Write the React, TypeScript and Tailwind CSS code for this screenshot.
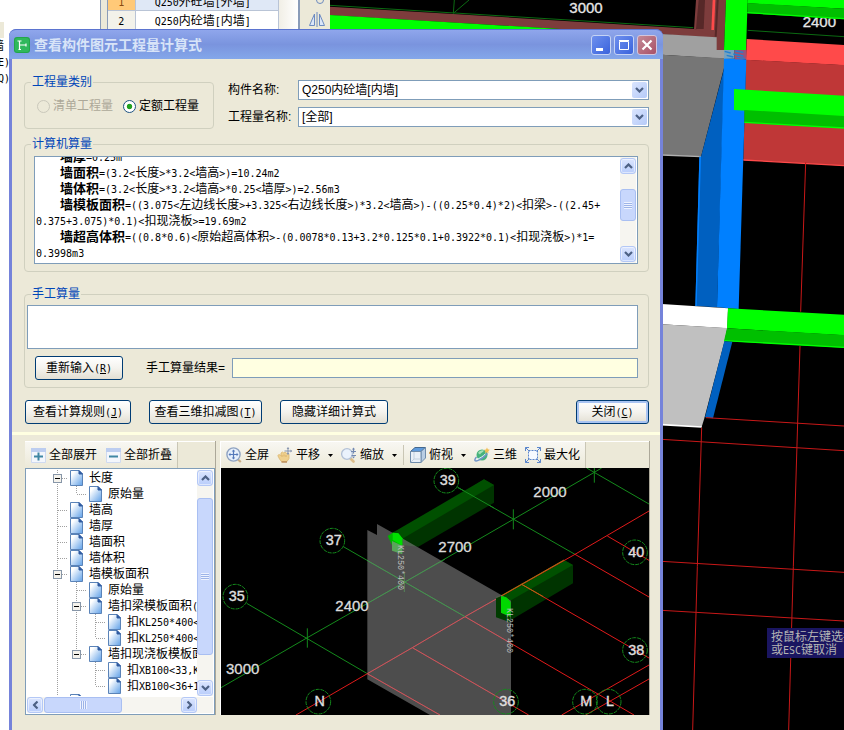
import { useState, type ReactNode } from 'react';

type Guide = 'line' | 'tee' | 'end' | 'minus' | 'minusEnd' | 'blank';

interface TreeRow {
    guides: Guide[];
    label: string;
}

const TREE_ROWS: TreeRow[] = [
    { guides: ['minus'], label: '长度' },
    { guides: ['line', 'end'], label: '原始量' },
    { guides: ['tee'], label: '墙高' },
    { guides: ['tee'], label: '墙厚' },
    { guides: ['tee'], label: '墙面积' },
    { guides: ['tee'], label: '墙体积' },
    { guides: ['minus'], label: '墙模板面积' },
    { guides: ['line', 'tee'], label: '原始量' },
    { guides: ['line', 'minus'], label: '墙扣梁模板面积(' },
    { guides: ['line', 'line', 'tee'], label: '扣KL250*400<' },
    { guides: ['line', 'line', 'end'], label: '扣KL250*400<' },
    { guides: ['line', 'minusEnd'], label: '墙扣现浇板模板面' },
    { guides: ['line', 'blank', 'tee'], label: '扣XB100<33,K' },
    { guides: ['line', 'blank', 'end'], label: '扣XB100<36+1' },
    { guides: ['tee'], label: '' },
];

const FORMULAS = [
    { name: '墙厚', lines: ['=0.25m'] },
    { name: '墙面积', lines: ['=(3.2<长度>*3.2<墙高>)=10.24m2'] },
    { name: '墙体积', lines: ['=(3.2<长度>*3.2<墙高>*0.25<墙厚>)=2.56m3'] },
    {
        name: '墙模板面积',
        lines: [
            '=((3.075<左边线长度>+3.325<右边线长度>)*3.2<墙高>)-((0.25*0.4)*2)<扣梁>-((2.45+',
            '0.375+3.075)*0.1)<扣现浇板>=19.69m2',
        ],
    },
    {
        name: '墙超高体积',
        lines: [
            '=((0.8*0.6)<原始超高体积>-(0.0078*0.13+3.2*0.125*0.1+0.3922*0.1)<扣现浇板>)*1=',
            '0.3998m3',
        ],
    },
];

// Half-width characters take exactly half of a Chinese character
function Txt({ children }: { children: string }) {
    return (
        <>
            {children.split(/([\x20-\x7e]+)/).map((part, i) =>
                i % 2 ? (
                    <span
                        key={i}
                        className="font-['DejaVu_Sans_Mono',monospace] text-[10px] leading-none font-normal"
                    >
                        {part}
                    </span>
                ) : (
                    part
                )
            )}
        </>
    );
}

function Chevron({ className = '' }: { className?: string }) {
    return (
        <svg viewBox="0 0 9 6" className={`h-[6px] w-[9px] ${className}`} fill="none">
            <path d="M1 1l3.500 3.500L8 1" stroke="#4d6185" strokeWidth="2.200" />
        </svg>
    );
}

function ScrollButton({ turn, label }: { turn: string; label: string }) {
    return (
        <button
            type="button"
            aria-label={label}
            className="flex size-4 shrink-0 items-center justify-center rounded-[3px] border border-[#b4c8f6] bg-linear-to-b from-[#dbe5fe] to-[#b9cdfb] shadow-[inset_0_0_0_1px_#ffffff80]"
        >
            <Chevron className={turn} />
        </button>
    );
}

function Fieldset({ title, className, children }: { title: string; className: string; children: ReactNode }) {
    return (
        <fieldset className={`min-w-0 rounded-[4px] border border-[#d0d0bf] ${className}`}>
            <legend className="ml-[6px] px-px leading-4 text-[#0046b8]">{title}</legend>
            {children}
        </fieldset>
    );
}

function XpButton({ text, hotkey, className }: { text: string; hotkey?: string; className: string }) {
    return (
        <button
            type="button"
            className={`h-6 shrink-0 rounded-[3px] border border-[#003c74] bg-linear-to-b from-white via-[#f4f3ee] to-[#e3dfd3] leading-4 whitespace-nowrap ${className}`}
        >
            {text}
            {hotkey && (
                <span className="font-['DejaVu_Sans_Mono',monospace] text-[10px] leading-none">
                    (<u>{hotkey}</u>)
                </span>
            )}
        </button>
    );
}

function SelectRow({ id, label, value }: { id: string; label: string; value: string }) {
    return (
        <div className="flex h-5 items-center">
            <label htmlFor={id} className="w-[70px] shrink-0 whitespace-nowrap">
                {label}
            </label>
            <div className="relative flex-1">
                <select
                    id={id}
                    className="block h-5 w-full appearance-none border border-[#7f9db9] bg-white pl-[3px] leading-4 outline-none"
                >
                    <option>{value}</option>
                </select>
                <span className="pointer-events-none absolute top-[2px] right-[2px] flex h-4 w-[15px] items-center justify-center rounded-[2px] bg-linear-to-br from-[#dae5fe] to-[#b5caf8]">
                    <Chevron />
                </span>
            </div>
        </div>
    );
}

function GuideCell({ type }: { type: Guide }) {
    const top = type !== 'blank';
    const bottom = type === 'line' || type === 'tee' || type === 'minus';
    const across = type !== 'blank' && type !== 'line';
    const box = type === 'minus' || type === 'minusEnd';
    return (
        <svg viewBox="0 0 19 16" className="h-4 w-[19px] shrink-0" shapeRendering="crispEdges" fill="none">
            <g stroke="#a0a0a0" strokeDasharray="1 1">
                {top && <path d="M9.500 0V8" />}
                {bottom && <path d="M9.500 8V16" />}
                {across && <path d="M10 8.500H19" />}
            </g>
            {box && (
                <>
                    <rect x="5.500" y="4.500" width="8" height="8" fill="#f4f2ec" stroke="#8796a8" />
                    <path d="M7 8.500h5" stroke="#000" />
                </>
            )}
        </svg>
    );
}

function PageIcon() {
    return (
        <svg viewBox="0 0 13 16" className="mr-[6px] ml-[3px] h-4 w-[13px] shrink-0">
            <defs>
                <linearGradient id="page" x1="0" y1="0" x2="1" y2="1">
                    <stop offset="0.200" stopColor="#fff" />
                    <stop offset="1" stopColor="#5fa0e8" />
                </linearGradient>
            </defs>
            <path d="M.5.500H9L12.500 4v11.500H.5z" fill="url(#page)" stroke="#5a83b8" />
            <path d="M9 .5V4h3.500z" fill="#2f5aa0" stroke="#2f5aa0" />
        </svg>
    );
}

function ToolButton({ icon, text, menu }: { icon: ReactNode; text: string; menu?: boolean }) {
    return (
        <button type="button" className="flex shrink-0 items-center gap-[3px] whitespace-nowrap">
            {icon}
            <span>{text}</span>
            {menu && (
                <svg viewBox="0 0 5 3" className="ml-[5px] h-[3px] w-[5px]">
                    <path d="M0 0h5L2.500 3z" />
                </svg>
            )}
        </button>
    );
}

const FullIcon = (
    <svg viewBox="0 0 16 16" className="size-4" fill="none">
        <path d="M12 12.500l2.800 2.500" stroke="#c9ad84" strokeWidth="2.200" />
        <circle cx="7.500" cy="7.500" r="6.600" fill="#e6effb" stroke="#8fa3c2" strokeWidth="1.400" />
        <path d="M7.500 3v9M3 7.500h9" stroke="#5579ba" strokeWidth="1.200" />
        <path d="M5.800 4.400L7.500 2.500l1.700 1.900zM5.800 10.600l1.700 1.900 1.700-1.900zM4.400 5.800L2.500 7.500l1.900 1.700zM10.600 5.800l1.900 1.700-1.900 1.700z" fill="#5579ba" />
    </svg>
);

const PanIcon = (
    <svg viewBox="0 0 16 16" className="size-4" fill="none">
        <path d="M.8 8.500L2 7.500l2 1V6l1.500-1 1 .8L8 5.200l1.300 1 1.500-.2 1.200 1.500v4L10 14.500H4.500L2.500 12z" fill="#efd08e" stroke="#dcb66e" strokeWidth=".8" />
        <path d="M5 8v2M7 7.500v2M9 8v2" stroke="#d3a75c" strokeWidth=".7" />
        <path d="M4.500 15h5.500" stroke="#b98a55" strokeWidth="1.400" />
        <path d="M11 .5v7M7.500 4h7" stroke="#8694ae" />
        <path d="M9.600 2L11 .3 12.400 2zM9.600 6L11 7.700 12.400 6zM13.500 2.600L15.200 4l-1.700 1.400z" fill="#8694ae" />
    </svg>
);

const ZoomIcon = (
    <svg viewBox="0 0 16 16" className="size-4" fill="none">
        <path d="M9.500 11.500l3 3" stroke="#dcbd8a" strokeWidth="2.600" strokeLinecap="round" />
        <circle cx="6" cy="7" r="5.400" fill="#eaf2fc" stroke="#b3c1d6" strokeWidth="1.300" />
        <path d="M12.500 1.500v5M10 4.500h5M10.500 8.500h4.500" stroke="#7289b2" strokeWidth="1.200" />
        <path d="M11 2.500L12.500.500l1.500 2zM11 9.500l1.500 2 1.500-2z" fill="#7289b2" />
    </svg>
);

const CubeIcon = (
    <svg viewBox="0 0 16 16" className="size-4" strokeLinejoin="round" stroke="#6f8cab">
        <path d="M.5 4.500L5 .5h10.500L11 4.500z" fill="#5f9bdc" stroke="#44688f" />
        <path d="M11 4.500l4.500-4V11L11 15.500z" fill="#b9cee4" />
        <path d="M.5 4.500H11v11H.5z" fill="#e9f0f7" />
        <path d="M4 5v7M1 15l3-3h6.500" fill="none" stroke="#c2d0de" />
    </svg>
);

const OrbitIcon = (
    <svg viewBox="0 0 16 16" className="size-4" fill="none">
        <circle cx="8" cy="8" r="5.500" fill="#46b27c" />
        <path d="M4 6c1.500-2.500 4-3.200 6-2.500-1 2-3 1.800-4 4z" fill="#a6e2b6" />
        <path d="M2.500 10C1 11.500.5 13 1.200 13.700c1.200 1.200 7-1.700 12.300-7.200" stroke="#6f93c8" strokeWidth="1.400" />
        <path d="M2.500 12.300c3-.6 6.500-3 9-5.500" stroke="#e6f4ff" />
        <path d="M13 .5l.8 1.800 2 .5-1.500 1.500.2 2-1.700-1-2 .7.500-2L10 2.800l2-.3z" fill="#f1bd55" />
    </svg>
);

const MaxIcon = (
    <svg viewBox="0 0 16 16" className="size-4" fill="none" stroke="#5b86cc">
        <rect x="3.500" y="3.500" width="9" height="9" fill="#f7faff" strokeDasharray="2 1" />
        <path d="M.5 4V.5H4M12 .5h3.500V4M15.500 12v3.500H12M4 15.500H.5V12M.5.500l4 4M15.500.500l-4 4M15.500 15.500l-4-4M.5 15.500l4-4" />
    </svg>
);

function FoldIcon({ plus }: { plus?: boolean }) {
    return (
        <svg viewBox="0 0 15 15" className="size-[15px]">
            <path d="M.5.500h14v14H.5z" fill="#f3f6fc" stroke="#cfdaf0" />
            <path d="M0 0h15v4H0z" fill="#bccdf0" />
            <path d="M3 8.500h9" stroke="#3f87a4" strokeWidth="2" />
            {plus && <path d="M7.500 4.500v8" stroke="#3f87a4" strokeWidth="2" />}
        </svg>
    );
}

// Main 3D model view behind the dialog
function ModelScene() {
    return (
        <svg
            viewBox="30 0 1542 2190"
            preserveAspectRatio="xMinYMin slice"
            className="h-full w-full bg-black font-['Liberation_Sans',sans-serif]"
        >
            <g stroke="#0b6a12" strokeWidth="3" fill="none">
                <path d="M30 16L1120 83M403 0L400 40L447 0M1283 91L1572 110" />
            </g>
            <g fill="#e6e6e6" stroke="#e6e6e6" fontSize="45">
                <text x="748" y="38">3000</text>
                <text x="1448" y="80">2400</text>
            </g>
            <path d="M30 20L400 42L1125 87L1190 105V114L1025 103L735 88L30 46z" fill="#7d3c3c" />
            <path d="M30 45L735 88V100H30z" fill="#0f0" />
            <path d="M1128 0H1218L1212 150H1188V111L1122 87z" fill="#7d3c3c" />
            <path d="M1136 0H1155L1151 87H1128z" fill="#572828" />
            <path d="M1178 0H1186L1182 90H1174z" fill="#ff4a4a" />
            <path d="M1190 0H1196L1190 110H1184z" fill="#572828" />
            <path d="M1218 0H1283L1278 150H1212z" fill="#0f0" />
            <path d="M1283 0H1572V26L1282 10z" fill="#0f0" />
            <path d="M1282 9L1572 26V58L1282 40z" fill="#00bf00" />
            <path d="M1282 38L1572 56" stroke="#0f0" strokeWidth="4" />

            {/* Columns and walls */}
            <path d="M1025 102L1190 112V150H1212V176L1025 164z" fill="#a0a0a0" />
            <path d="M1025 164L1212 175V204L1143 470L1025 464z" fill="#767676" />
            <path d="M1025 465L1143 470" stroke="#b0b0b0" strokeWidth="4" />
            <path d="M1280 117L1572 135V196L1278 180z" fill="#ff4a4a" />
            <path d="M1278 179L1572 195V497L1270 480z" fill="#bf3737" />
            <path d="M1270 480L1572 497" stroke="#ff4a4a" strokeWidth="4" />
            <path d="M1213 203L1191 922L1126 918L1138 470H1143z" fill="#0060c0" />
            <path d="M1138 470H1143L1130 918H1126z" fill="#0080ff" />
            <path d="M1212 174L1279 178L1256 927L1191 922z" fill="#0080ff" />
            <path d="M1212 150H1244V176H1212z" fill="#76a2bd" />
            <path d="M1244 150H1279V178H1244z" fill="#9b5276" />
            <path d="M1214 154l18 5M1220 166l20 5M1246 153l24 4M1240 162l30 6M1250 172l24 3" stroke="#2180d0" strokeWidth="4" />
            <path d="M1242 267L1572 287V352L1242 330z" fill="#0f0" />
            <path d="M1273 330L1572 348V385L1273 368z" fill="#00bf00" />
            <path d="M1273 367L1572 384" stroke="#0f0" strokeWidth="4" />
            <path d="M1025 912L1224 925L1222 985L1025 973z" fill="#fff" />
            <path d="M1025 973L1222 984L1214 1022L1153 1255L1145 1281L1025 1274z" fill="#c0c0c0" />
            <path d="M1025 1274L1145 1281" stroke="#fff" strokeWidth="5" />
            <path d="M1224 925L1572 944V1006L1221 985z" fill="#0f0" />
            <path d="M1221 985L1572 1005V1043L1212 1023z" fill="#00bf00" />
            <path d="M1212 1022L1572 1042" stroke="#0f0" strokeWidth="4" />
            <path d="M1213 1024L1237 1025L1179 1255L1155 1252z" fill="#0060c0" />

            <g stroke="#c81818" strokeWidth="3" fill="none">
                <path d="M1457 487L1442 935M1440 1038L1435 1200L1420 1700L1406 2190" />
                <path d="M1145 1283L1132 1700L1118 2190" />
                <path d="M1158 1253L1572 1278M1025 1318L1572 1352M1025 1684L1572 1717M1025 1831L1572 1863" />
            </g>
        </svg>
    );
}

const AXIS_MARKS = [
    { x: 694, y: 152, text: '39' },
    { x: 352, y: 332, text: '37' },
    { x: 61, y: 500, text: '35' },
    { x: 1260, y: 367, text: '40' },
    { x: 1260, y: 660, text: '38' },
    { x: 873, y: 815, text: '36' },
    { x: 310, y: 815, text: 'N' },
    { x: 1110, y: 815, text: 'M' },
    { x: 1181, y: 815, text: 'L' },
];

// Deduction preview of the selected wall
function WallPreview() {
    return (
        <svg
            viewBox="18 114 1284 741"
            preserveAspectRatio="xMidYMid slice"
            className="h-[247px] w-full bg-black font-['Liberation_Sans',sans-serif]"
        >
            <g stroke="#148a1c" strokeWidth="3" fill="none">
                <path d="M18 773L277 623L568 457L895 268L1138 127L1160 114" />
                <path d="M95 520L457 731M385 350L750 560M728 172L1080 373M1115 114L1302 222" />
                <path d="M277 595V653M568 428V486M895 238V298M1138 114V158" />
            </g>
            <path d="M548 318L807 148L837 165V218L610 350L562 345z" fill="#003400" />
            <path d="M530 310L807 148L837 165L562 326z" fill="#005000" />
            <path d="M728 172L837 234" stroke="#148a1c" strokeWidth="3" />
            <path d="M843 500L858 495L1047 390L1074 405V460L888 570L843 560z" fill="#003400" />
            <path d="M858 498L1047 390L1074 405L885 512z" fill="#005000" />
            <g stroke="#e01a1a" strokeWidth="3" fill="none">
                <path d="M243 855L457 731L592 653L750 560L1080 373L1302 243" />
                <path d="M457 731L675 855M592 653L941 855M750 560L1257 855M920 463L1302 684M1080 373L1302 501M1177 318L1302 391" />
                <path d="M1040 855L1302 705M1112 855L1302 747" />
            </g>
            <path d="M858 498L1047 390M920 463L985 500" stroke="#b06a10" strokeWidth="3" />
            <path
                d="M457 300L486 315V282L530 307L888 512V855H645L457 748z"
                fill="#808080"
                fillOpacity=".6"
            />
            {/* Axes seen through the wall */}
            <g strokeWidth="3" fill="none" opacity=".6">
                <path d="M457 731L592 653L750 560L860 498M457 731L675 855M592 653L888 824M750 560L888 640" stroke="#e8505c" />
                <path d="M457 520L568 457L690 388M457 392L750 560" stroke="#38a048" />
            </g>
            <path d="M518 318L533 308L550 310L562 325V345H531z" fill="#00b400" />
            <path d="M533 308L550 310L562 325V347L533 330z" fill="#00e000" />
            <path d="M531 333L562 347V373L531 362z" fill="#5aa55a" />
            <path d="M843 505L858 498V548L886 560V577L843 562z" fill="#003c00" />
            <path d="M858 498L874 502L887 516V560L858 548z" fill="#00d800" />

            {AXIS_MARKS.map((m) => (
                <g key={m.text}>
                    <circle cx={m.x} cy={m.y} r="37" fill="none" stroke="#148a1c" strokeWidth="3" strokeDasharray="12 3" />
                    <text
                        x={m.x + 4}
                        y={m.y + 14}
                        textAnchor="middle"
                        fill="#e0e0e0"
                        stroke="#e0e0e0"
                        fontSize="43"
                    >
                        {m.text}
                    </text>
                </g>
            ))}
            <g fill="#dcdcdc" stroke="#dcdcdc" fontSize="45">
                <text x="955" y="202">2000</text>
                <text x="670" y="365">2700</text>
                <text x="361" y="544">2400</text>
                <text x="33" y="733">3000</text>
            </g>
            <g fill="#bcbcbc" fontSize="25" className="font-['Liberation_Mono',monospace]">
                <text transform="translate(548 345) rotate(90)">KL250*400</text>
                <text transform="translate(875 534) rotate(90)">KL250*400</text>
            </g>
        </svg>
    );
}

function DesktopBackground() {
    return (
        <div className="absolute inset-0 flex bg-white">
            <div className="w-[100px] shrink-0 overflow-hidden pt-[22px]">
                <div className="h-4 w-1 bg-[#ece9d8]" />
                <ul className="-ml-2 leading-4">
                    <li>墙</li>
                    <li className="pl-[6px]"><Txt>E)</Txt></li>
                    <li className="pl-[6px]"><Txt>Q)</Txt></li>
                </ul>
            </div>
            <div className="w-[8px] shrink-0 border-x border-[#8a9cb8] bg-[#ece9d8]" />
            <table className="h-[30px] w-[171px] shrink-0 table-fixed border-collapse self-start text-center leading-4">
                <tbody>
                    <tr className="h-[10px]">
                        <th scope="row" className="w-[27px] border-r border-b border-[#b9c4d6] bg-[#ffc978] p-0 font-normal text-[#8a4a10]">
                            <div className="-mt-[6px] h-4"><Txt>1</Txt></div>
                        </th>
                        <td className="border-r border-b border-[#b9c4d6] bg-[#dfe8f6] p-0">
                            <div className="-mt-[6px] h-4 pr-2"><Txt>Q250外砼墙[外墙]</Txt></div>
                        </td>
                    </tr>
                    <tr className="h-5">
                        <th scope="row" className="border-r border-[#b9c4d6] bg-[#f3f2ea] p-0 font-normal">
                            <Txt>2</Txt>
                        </th>
                        <td className="border-r border-[#b9c4d6] bg-white p-0 pr-2">
                            <Txt>Q250内砼墙[内墙]</Txt>
                        </td>
                    </tr>
                </tbody>
            </table>
            <div className="w-[19px] shrink-0 bg-linear-to-r from-[#f1efe6] to-white" />
            <div className="w-[32px] shrink-0 border-l-2 border-[#8a9cb8] bg-[#ece9d8]">
                <svg viewBox="0 0 30 30" className="h-[30px] w-[30px]" fill="none" stroke="#6d8bc0">
                    <circle cx="20" cy="0" r="3.500" />
                    <path d="M14.500 14v11.500H9.500zM19.500 14v11.500H24.500z" fill="#dbe6f8" />
                    <path d="M17 12v15" />
                </svg>
            </div>
            <div className="min-w-0 flex-1">
                <ModelScene />
            </div>
        </div>
    );
}

function TitleBar() {
    return (
        <header className="flex h-[30px] items-center rounded-t-[7px] border-t border-[#5b74d0] bg-linear-to-b from-[#8fa6ec] via-[#7a94de] to-[#84a7ea] pr-[6px] pl-[5px]">
            <svg viewBox="0 0 16 16" className="size-4 shrink-0">
                <rect width="16" height="16" rx="3" fill="#23a64b" />
                <rect x="1" y="1" width="14" height="14" rx="2.500" fill="#2fb85c" />
                <path d="M5.500 4v8.500M5.500 8H12M12 6.500v3M3.500 4H7.500M4.500 12.500H7" stroke="#fff" strokeWidth="1.200" fill="none" />
            </svg>
            <h1 className="ml-1 flex-1 text-[14px] leading-5 font-bold whitespace-nowrap text-[#d8e4f8]">
                查看构件图元工程量计算式
            </h1>
            <div className="flex gap-[3px]">
                <button type="button" aria-label="最小化" className="size-[20px] rounded-[3px] border border-[#c5d3f5] bg-linear-to-br from-[#6f90ee] to-[#3a62dc]">
                    <svg viewBox="0 0 18 18"><path d="M4 12h7v3H4z" fill="#fff" /></svg>
                </button>
                <button type="button" aria-label="最大化" className="size-[20px] rounded-[3px] border border-[#c5d3f5] bg-linear-to-br from-[#6f90ee] to-[#3a62dc]">
                    <svg viewBox="0 0 18 18" fill="none" stroke="#fff"><path d="M4.500 5.500h9v8h-9zM4 4.500h10" /></svg>
                </button>
                <button type="button" aria-label="关闭" className="size-[20px] rounded-[3px] border border-[#d3c5dc] bg-linear-to-br from-[#c48a96] to-[#a85068]">
                    <svg viewBox="0 0 18 18"><path d="M4.500 4.500l9 9M13.500 4.500l-9 9" stroke="#fff" strokeWidth="2.200" /></svg>
                </button>
            </div>
        </header>
    );
}

export default function App() {
    const [kind, setKind] = useState('quota');
    const [manual, setManual] = useState('');

    const radioClass =
        'size-[13px] appearance-none rounded-full border border-[#1d5281] bg-white checked:bg-[radial-gradient(circle,#21a121_0_30%,#fff_40%)] disabled:border-[#cac8bb] disabled:bg-transparent';

    return (
        <div className="relative min-h-screen overflow-hidden font-['Liberation_Sans','Noto_Sans_CJK_SC',sans-serif] text-[12px] leading-4 text-black">
            <DesktopBackground />

            <div className="absolute top-[628px] right-0 w-[77px] overflow-hidden bg-[#1a1560] pt-[3px] pb-px pl-1 leading-[13px] whitespace-nowrap text-[#b4b4b4]">
                <p>按鼠标左键选择</p>
                <p><Txt>或ESC键取消</Txt></p>
            </div>

            <main className="relative mt-[29px] mr-[181px] ml-[9px] flex min-h-[calc(100vh-29px)] flex-col rounded-t-[8px] bg-[#7583da]">
                <TitleBar />
                <div className="mx-[3px] flex flex-1 flex-col bg-[#ece9d8]">
                    <section className="pt-[15px] pr-[11px] pb-2 pl-3">
                        <div className="flex gap-[14px]">
                            <Fieldset title="工程量类别" className="h-[55px] w-[190px] shrink-0">
                                <div className="flex h-8 items-center gap-[10px] pl-3">
                                    <label className="flex items-center gap-[3px] text-[#aca899]">
                                        <input type="radio" name="kind" disabled className={radioClass} />
                                        清单工程量
                                    </label>
                                    <label className="flex items-center gap-[3px]">
                                        <input
                                            type="radio"
                                            name="kind"
                                            checked={kind === 'quota'}
                                            onChange={() => setKind('quota')}
                                            className={radioClass}
                                        />
                                        定额工程量
                                    </label>
                                </div>
                            </Fieldset>
                            <div className="flex min-w-0 flex-1 flex-col gap-[7px] pt-[6px]">
                                <SelectRow id="member" label="构件名称:" value="Q250内砼墙[内墙]" />
                                <SelectRow id="quantity" label="工程量名称:" value="[全部]" />
                            </div>
                        </div>

                        <Fieldset title="计算机算量" className="mt-[7px]">
                            <div className="mt-1 mr-[10px] mb-[7px] ml-[9px] flex h-[108px] border border-[#7f9db9] bg-white">
                                <div className="min-w-0 flex-1 overflow-hidden pl-px">
                                    <div className="-mt-2 leading-4 whitespace-nowrap">
                                        {FORMULAS.map((f) =>
                                            f.lines.map((line, i) => (
                                                <p key={line} className="h-4">
                                                    {i === 0 && (
                                                        <b className="ml-6 text-[13px] leading-none">{f.name}</b>
                                                    )}
                                                    <Txt>{line}</Txt>
                                                </p>
                                            ))
                                        )}
                                    </div>
                                </div>
                                <div className="mr-px flex w-4 flex-col bg-[#f6f5f0] py-px">
                                    <ScrollButton turn="rotate-180" label="向上滚动" />
                                    <div className="mt-[15px] mb-auto flex h-8 items-center justify-center rounded-[3px] border border-[#a9bff2] bg-[#c8d7fc]">
                                        <span className="h-[7px] w-2 bg-[repeating-linear-gradient(#eef3ff_0_1px,#9db4e8_1px_2px)]" />
                                    </div>
                                    <ScrollButton turn="" label="向下滚动" />
                                </div>
                            </div>
                        </Fieldset>

                        <Fieldset title="手工算量" className="mt-[14px]">
                            <div className="pt-[3px] pr-[10px] pb-[7px] pl-[2px]">
                                <textarea
                                    aria-label="手工算量"
                                    value={manual}
                                    onChange={(e) => setManual(e.target.value)}
                                    className="block h-11 w-full resize-none border border-[#7f9db9] bg-white px-1 outline-none"
                                />
                                <div className="mt-[7px] flex items-center pl-2">
                                    <XpButton text="重新输入" hotkey="R" className="w-[88px]" />
                                    <label htmlFor="result" className="ml-[23px] w-[86px] shrink-0 whitespace-nowrap">
                                        手工算量结果=
                                    </label>
                                    <input
                                        id="result"
                                        readOnly
                                        className="h-5 min-w-0 flex-1 border border-[#7f9db9] bg-[#ffffe1] outline-none"
                                    />
                                </div>
                            </div>
                        </Fieldset>

                        <div className="mt-3 flex gap-[18px] pl-px">
                            <XpButton text="查看计算规则" hotkey="J" className="w-[106px]" />
                            <XpButton text="查看三维扣减图" hotkey="T" className="w-[113px]" />
                            <XpButton text="隐藏详细计算式" className="w-[108px]" />
                            <XpButton
                                text="关闭"
                                hotkey="C"
                                className="ml-auto w-[73px] shadow-[inset_0_0_0_2px_#a9c4f2]"
                            />
                        </div>
                    </section>

                    <div className="h-[3px] bg-[#ffffe1]" />

                    <section className="flex gap-1 pt-[6px] pr-[10px] pb-[14px] pl-[13px]">
                        {/* Tree panel */}
                        <div className="w-[191px] shrink-0 border-r border-[#aca899]">
                            <div className="flex h-[27px] border-t border-white">
                                <div className="flex items-center gap-[9px] border-r border-[#c9c6b5] bg-linear-to-b from-[#f8f7f2] to-[#ece9d8] pr-[5px] pl-[6px]">
                                    <ToolButton icon={<FoldIcon plus />} text="全部展开" />
                                    <ToolButton icon={<FoldIcon />} text="全部折叠" />
                                </div>
                            </div>
                            <div className="h-[247px] border border-[#7f9db9] bg-white p-px">
                                <div className="flex h-[226px]">
                                    <ul className="min-w-0 flex-1 overflow-hidden pl-[21px] whitespace-nowrap">
                                        {TREE_ROWS.map((row, i) => (
                                            <li key={i} className="flex h-4 items-center">
                                                {row.guides.map((g, k) => (
                                                    <GuideCell key={k} type={g} />
                                                ))}
                                                <PageIcon />
                                                <span><Txt>{row.label}</Txt></span>
                                            </li>
                                        ))}
                                    </ul>
                                    <div className="flex w-4 flex-col bg-[#f6f5f0]">
                                        <ScrollButton turn="rotate-180" label="向上滚动" />
                                        <div className="mt-3 mb-auto flex h-[157px] items-center justify-center rounded-[3px] border border-[#a9bff2] bg-[#c8d7fc]">
                                            <span className="h-[7px] w-2 bg-[repeating-linear-gradient(#eef3ff_0_1px,#9db4e8_1px_2px)]" />
                                        </div>
                                        <ScrollButton turn="" label="向下滚动" />
                                    </div>
                                </div>
                                <div className="mt-px flex h-4 bg-[#f6f5f0] pr-4">
                                    <ScrollButton turn="rotate-90" label="向左滚动" />
                                    <div className="mr-auto ml-px flex w-[78px] items-center justify-center rounded-[3px] border border-[#a9bff2] bg-[#c8d7fc]">
                                        <span className="h-2 w-[7px] bg-[repeating-linear-gradient(90deg,#eef3ff_0_1px,#9db4e8_1px_2px)]" />
                                    </div>
                                    <ScrollButton turn="-rotate-90" label="向右滚动" />
                                </div>
                            </div>
                        </div>

                        {/* 3D preview panel */}
                        <div className="min-w-0 flex-1 border-x border-l-white border-r-[#aca899]">
                            <div className="flex h-[27px] border-t border-white">
                                <div className="flex items-center border-r border-[#c9c6b5] bg-linear-to-b from-[#f8f7f2] to-[#ece9d8] px-[5px]">
                                    <div className="flex gap-2">
                                        <ToolButton icon={FullIcon} text="全屏" />
                                        <ToolButton icon={PanIcon} text="平移" menu />
                                        <ToolButton icon={ZoomIcon} text="缩放" menu />
                                    </div>
                                    <div className="mx-[6px] h-5 w-px bg-[#c9c6b5]" />
                                    <div className="flex gap-2">
                                        <ToolButton icon={CubeIcon} text="俯视" menu />
                                        <ToolButton icon={OrbitIcon} text="三维" />
                                        <ToolButton icon={MaxIcon} text="最大化" />
                                    </div>
                                </div>
                            </div>
                            <WallPreview />
                        </div>
                    </section>
                </div>
            </main>
        </div>
    );
}
